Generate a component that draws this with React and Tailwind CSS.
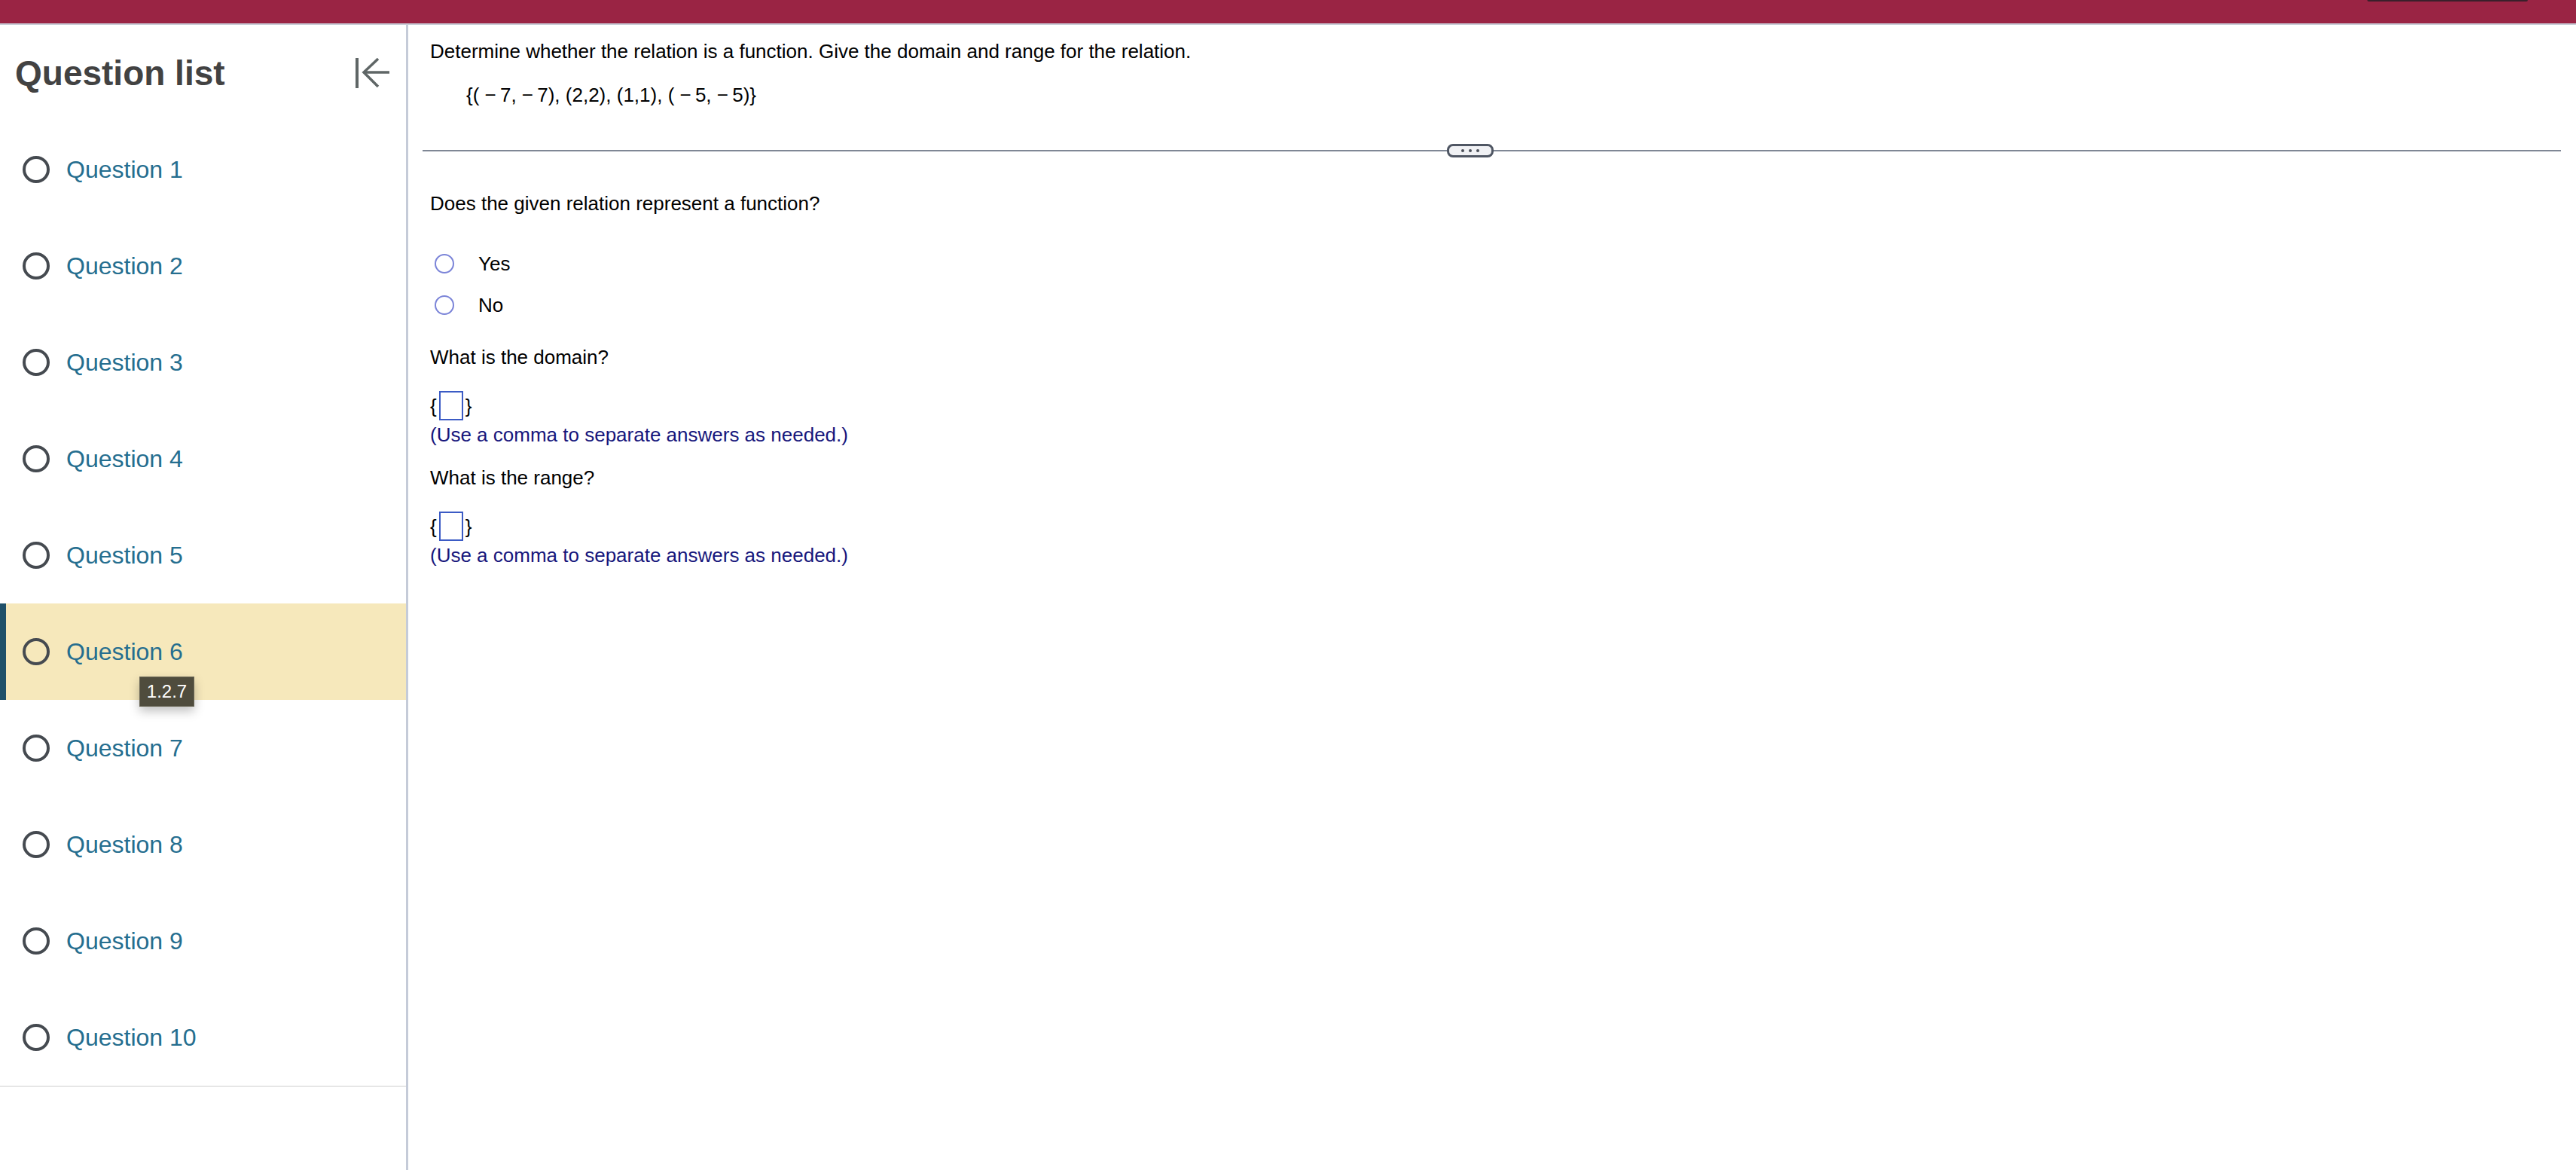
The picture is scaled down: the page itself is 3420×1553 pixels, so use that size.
const questions = [1, 2, 3, 4, 5, 6, 7, 8, 9, 10];

const CollapseIcon = () => (
  <svg width="48" height="40" viewBox="0 0 48 40" fill="none" stroke="#5f6666" strokeWidth="3.5">
    <line x1="4" y1="0" x2="4" y2="40" strokeWidth="4" />
    <line x1="13" y1="19" x2="47" y2="19" />
    <polyline points="32,1 13,19 32,38" />
  </svg>
);

const QuestionRow = ({ n, active }) => {
  return (
    <div
      className={
        active
          ? "relative h-[128px] flex items-center bg-[#f6e8bb] border-l-[8px] border-[#1f5069] pl-[22px]"
          : "relative h-[128px] flex items-center pl-[30px]"
      }
    >
      <span className="w-[36px] h-[36px] rounded-full border-[4px] border-[#454a50] shrink-0" />
      <span className="ml-[22px] text-[32px] text-[#256e8f]">Question {n}</span>
      {active && (
        <div className="absolute left-[177px] top-[97px] w-[73px] h-[40px] bg-[#4f4c3d] border border-[#6a6757] text-white text-[24px] flex items-center justify-center shadow-[0_6px_14px_rgba(0,0,0,0.25)] z-10">
          1.2.7
        </div>
      )}
    </div>
  );
};

const Radio = ({ label, className }) => (
  <div className={"flex items-center h-[30px] " + className}>
    <span className="ml-[6px] w-[26px] h-[26px] rounded-full border-[2.5px] border-[#7b84d8] shrink-0" />
    <span className="ml-[32px]">{label}</span>
  </div>
);

const SetAnswer = ({ className }) => (
  <div className={"flex items-center h-[39px] " + className}>
    <span>{"{"}</span>
    <span className="ml-[3px] w-[32px] h-[39px] border-[2.5px] border-[#3b5bc5] bg-white" />
    <span className="ml-[3px]">{"}"}</span>
  </div>
);

export default function App() {
  return (
    <div className="h-[1553px] flex flex-col bg-white font-['Liberation_Sans',Arial,sans-serif] overflow-hidden">
      <div className="h-[33px] shrink-0 bg-[#9a2444] border-b-2 border-[#c8ccd6] flex justify-end pr-[64px]">
        <div className="w-[213px] h-[2px] bg-[#3a1f2b] rounded-b-md" />
      </div>

      <div className="flex flex-1">
        <aside className="w-[542px] shrink-0 border-r-[3px] border-[#c5cbd8] flex flex-col">
          <div className="h-[128px] flex items-center justify-between pl-[20px] pr-[21px]">
            <h1 className="text-[46px] font-bold text-[#424242] leading-none">Question list</h1>
            <CollapseIcon />
          </div>
          <div className="border-b-2 border-[#e6e6e6]">
            {questions.map((n) => (
              <QuestionRow key={n} n={n} active={n === 6} />
            ))}
          </div>
        </aside>

        <main className="flex-1 text-[26px] leading-[30px] text-black">
          <div className="pl-[29px] pt-[20px]">
            <p>Determine whether the relation is a function. Give the domain and range for the relation.</p>
            <p className="ml-[48px] mt-[28px]">{"{( −\u20097, −\u20097), (2,2), (1,1), ( −\u20095, −\u20095)}"}</p>
          </div>

          <div className="relative ml-[19px] mr-[20px] mt-[58px] h-[2px] bg-[#7f8795]">
            <button className="absolute left-[1360px] top-1/2 -translate-y-1/2 w-[62px] h-[18px] rounded-[8px] border-[3px] border-[#4f5663] bg-[#f0f1f4] flex items-center justify-center gap-[6px]">
              <span className="w-[4px] h-[4px] rounded-full bg-[#4a4f58]" />
              <span className="w-[4px] h-[4px] rounded-full bg-[#4a4f58]" />
              <span className="w-[4px] h-[4px] rounded-full bg-[#4a4f58]" />
            </button>
          </div>

          <div className="pl-[29px]">
            <p className="mt-[54px]">Does the given relation represent a function?</p>
            <Radio label="Yes" className="mt-[50px]" />
            <Radio label="No" className="mt-[25px]" />

            <p className="mt-[39px]">What is the domain?</p>
            <SetAnswer className="mt-[30px]" />
            <p className="mt-[4px] text-[#16167c]">(Use a comma to separate answers as needed.)</p>

            <p className="mt-[27px]">What is the range?</p>
            <SetAnswer className="mt-[30px]" />
            <p className="mt-[4px] text-[#16167c]">(Use a comma to separate answers as needed.)</p>
          </div>
        </main>
      </div>
    </div>
  );
}
